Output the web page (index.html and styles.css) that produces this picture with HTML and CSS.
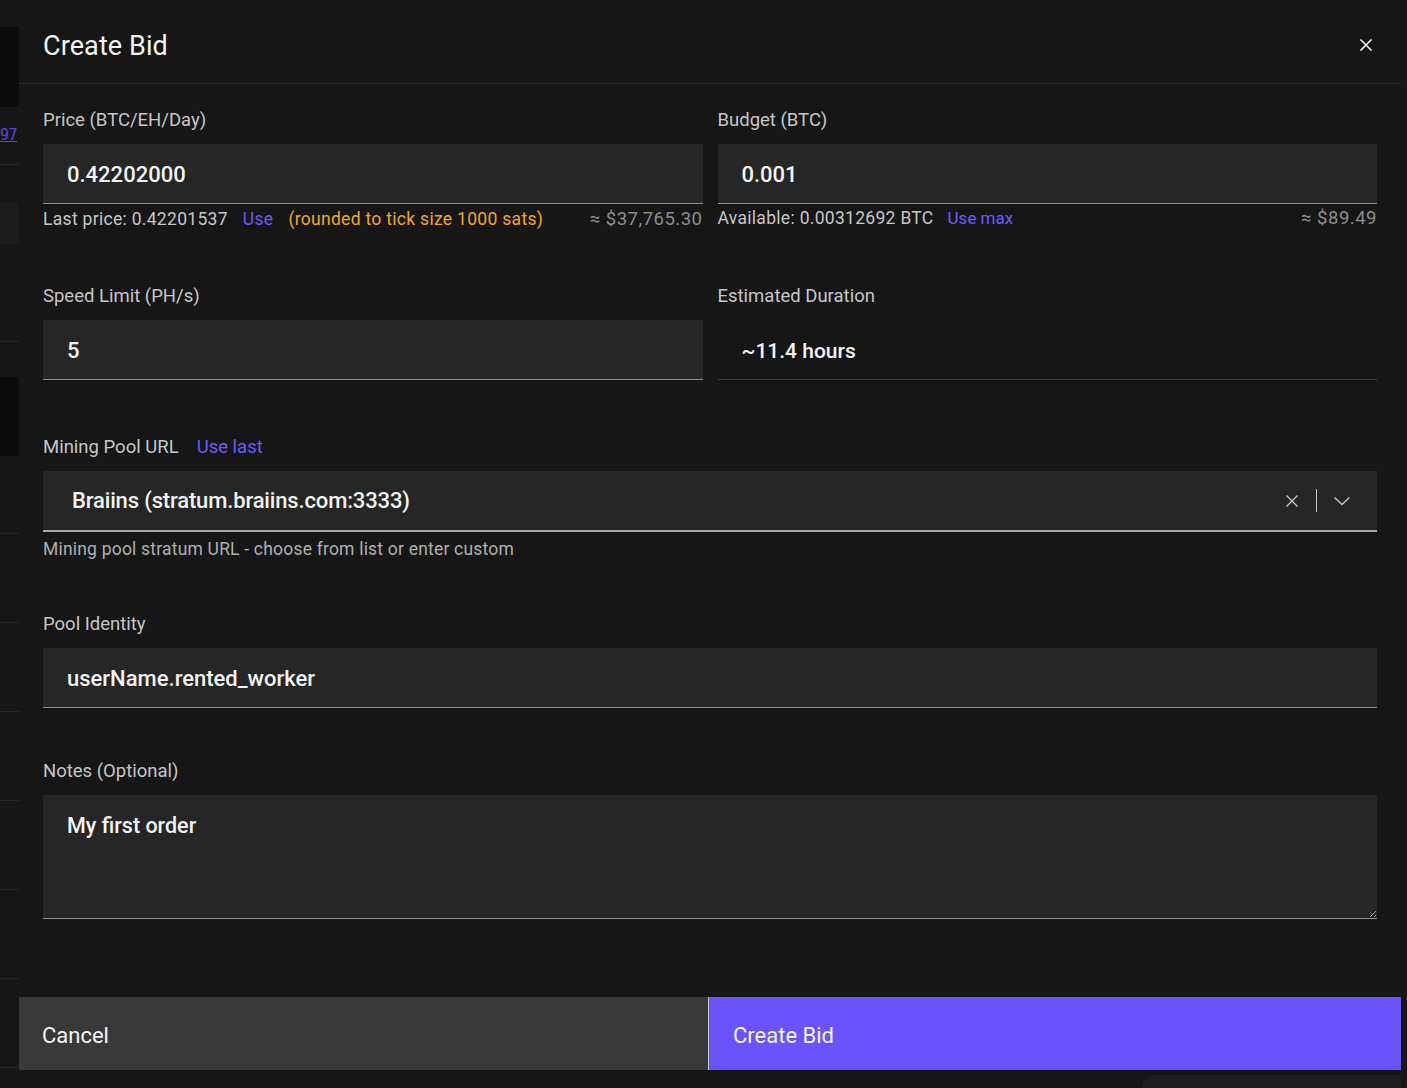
FILE: index.html
```html
<!DOCTYPE html>
<html lang="en">
<head>
<meta charset="utf-8">
<title>Create Bid</title>
<link rel="stylesheet" href="styles.css">
</head>
<body>
<div class="page">
  <div class="page-top">
    <div class="top-tab"></div>
  </div>
  <div class="page-strip">
    <div class="strip-dark s1"></div>
    <div class="strip-row s2"><span class="strip-link">97</span></div>
    <div class="strip-gap s3"></div>
    <div class="strip-gray s4"></div>
    <div class="strip-row s5"></div>
    <div class="strip-gap s6"></div>
    <div class="strip-dark s7"></div>
    <div class="strip-row s8"></div>
    <div class="strip-row s9"></div>
    <div class="strip-row s9"></div>
    <div class="strip-row s9"></div>
    <div class="strip-row s9"></div>
    <div class="strip-row s9"></div>
    <div class="strip-row s9"></div>
  </div>
  <div class="page-bottom">
    <div class="bottom-card"></div>
  </div>
</div>

<div class="overlay">
  <div class="modal" role="dialog" aria-labelledby="modal-title">
    <div class="modal-header">
      <h2 id="modal-title" class="modal-title">Create Bid</h2>
      <button class="close-btn" aria-label="Close">
        <svg width="14" height="14" viewBox="0 0 14 14"><path d="M1.5 1.5 L12.5 12.5 M12.5 1.5 L1.5 12.5" stroke="#f4f4f4" stroke-width="1.6" fill="none"/></svg>
      </button>
    </div>

    <div class="modal-body">
      <div class="grid-row row-first">
        <div class="field">
          <label class="label">Price (BTC/EH/Day)</label>
          <input class="text-input" type="text" value="0.42202000">
          <div class="helper">
            <span class="helper-text">Last price: 0.42201537</span>
            <span class="link gap-l">Use</span>
            <span class="warn gap-l">(rounded to tick size 1000 sats)</span>
            <span class="fiat">≈ $37,765.30</span>
          </div>
        </div>
        <div class="field">
          <label class="label">Budget (BTC)</label>
          <input class="text-input" type="text" value="0.001">
          <div class="helper helper-up">
            <span class="helper-text">Available: 0.00312692 BTC</span>
            <span class="link gap-m">Use max</span>
            <span class="fiat">≈ $89.49</span>
          </div>
        </div>
      </div>

      <div class="grid-row row-second">
        <div class="field">
          <label class="label">Speed Limit (PH/s)</label>
          <input class="text-input" type="text" value="5">
        </div>
        <div class="field">
          <label class="label">Estimated Duration</label>
          <div class="readonly">~11.4 hours</div>
        </div>
      </div>

      <div class="field row-pool">
        <div class="label-line">
          <label class="label">Mining Pool URL</label>
          <span class="link label-link">Use last</span>
        </div>
        <div class="combo">
          <span class="combo-value">Braiins (stratum.braiins.com:3333)</span>
          <span class="combo-actions">
            <svg class="combo-clear" width="14" height="14" viewBox="0 0 14 14"><path d="M1.5 1.5 L12.5 12.5 M12.5 1.5 L1.5 12.5" stroke="#c6c6c6" stroke-width="1.4" fill="none"/></svg>
            <span class="combo-divider"></span>
            <svg class="combo-chevron" width="18" height="10" viewBox="0 0 18 10"><path d="M1.5 1.5 L9 8.5 L16.5 1.5" stroke="#c6c6c6" stroke-width="1.4" fill="none"/></svg>
          </span>
        </div>
        <div class="helper-note">Mining pool stratum URL - choose from list or enter custom</div>
      </div>

      <div class="field row-identity">
        <label class="label">Pool Identity</label>
        <input class="text-input" type="text" value="userName.rented_worker">
      </div>

      <div class="field row-notes">
        <label class="label">Notes (Optional)</label>
        <textarea class="text-area">My first order</textarea>
      </div>
    </div>

    <div class="modal-footer">
      <button class="btn btn-secondary">Cancel</button>
      <button class="btn btn-primary">Create Bid</button>
    </div>
  </div>
</div>
</body>
</html>
```

FILE: styles.css
```css
* {
  box-sizing: border-box;
}

html, body {
  margin: 0;
  padding: 0;
  background: #161616;
  height: 100%;
  overflow: hidden;
}

body {
  font-family: Roboto, "Noto Sans", sans-serif;
  color: #f4f4f4;
}

/* ---------- background page (under overlay) ---------- */
.page {
  height: 1088px;
  display: flex;
  flex-direction: column;
}

.page-top {
  height: 0;
  position: relative;
}

.top-tab {
  position: absolute;
  left: 1056px;
  top: 0;
  width: 86px;
  height: 9px;
  background: #222222;
}

.page-strip {
  width: 20px;
  display: flex;
  flex-direction: column;
  flex: 1;
}

.strip-dark {
  background: #0b0b0b;
}

.strip-gray {
  background: #1c1c1c;
}

.strip-row {
  border-bottom: 1px solid #262626;
  display: flex;
  justify-content: flex-start;
  align-items: center;
  overflow: hidden;
}

.s1 { margin-top: 27px; height: 80px; }
.s2 { height: 58px; }
.s3 { height: 37px; }
.s4 { height: 42px; }
.s5 { height: 98px; }
.s6 { height: 35px; }
.s7 { height: 79px; }
.s8 { height: 78px; }
.s9 { height: 89px; flex: none; }

.strip-link {
  color: #5a46d6;
  text-decoration: underline;
  font-family: "DejaVu Sans Mono", monospace;
  font-size: 15px;
  letter-spacing: -0.5px;
  white-space: nowrap;
  padding-bottom: 2px;
}

.page-bottom {
  height: 0;
  position: relative;
}

.bottom-card {
  position: absolute;
  left: 1142px;
  bottom: 0;
  width: 259px;
  height: 13px;
  background: #1f1f1f;
  border-top-left-radius: 12px;
}

/* ---------- overlay & modal ---------- */
.overlay {
  position: fixed;
  inset: 0;
  display: flex;
  align-items: flex-start;
  padding-left: 19px;
}

.modal {
  width: 1382px;
  height: 1070px;
  background: #161616;
  display: flex;
  flex-direction: column;
}

.modal-header {
  height: 84px;
  border-bottom: 1px solid #2c2c2c;
  display: flex;
  align-items: center;
  justify-content: space-between;
  padding: 9px 28px 0 24px;
}

.modal-title {
  margin: 0;
  font-size: 27px;
  font-weight: 400;
  color: #f4f4f4;
  letter-spacing: 0.1px;
}

.close-btn {
  background: none;
  border: 0;
  padding: 0;
  width: 14px;
  height: 14px;
  margin-top: -2px;
  display: flex;
}

.modal-body {
  flex: 1;
  padding: 24px 24px 0;
  display: flex;
  flex-direction: column;
}

.grid-row {
  display: grid;
  grid-template-columns: 1fr 1fr;
  column-gap: 15px;
}

.row-second { margin-top: 55px; }
.row-pool { margin-top: 55px; }
.row-identity { margin-top: 53px; }
.row-notes { margin-top: 51px; }

.field {
  display: flex;
  flex-direction: column;
}

.label {
  font-size: 18.5px;
  line-height: 24px;
  color: #c6c6c6;
  margin-bottom: 12px;
}

.label-line {
  display: flex;
  align-items: baseline;
}

.label-link {
  margin-left: 18px;
  font-size: 18.5px;
  line-height: 24px;
}

.text-input {
  height: 60px;
  width: 100%;
  background: #262626;
  border: 0;
  border-bottom: 1px solid #8d8d8d;
  color: #f4f4f4;
  font-family: Roboto, "Noto Sans", sans-serif;
  font-size: 22px;
  font-weight: 500;
  padding: 2px 24px 0;
  outline: none;
}

.readonly {
  height: 60px;
  border-bottom: 1px solid #393939;
  display: flex;
  align-items: center;
  padding: 2px 0 0 24px;
  font-size: 21px;
  font-weight: 500;
  color: #f4f4f4;
}

.helper {
  margin-top: 5px;
  height: 20px;
  display: flex;
  align-items: center;
  font-size: 17.5px;
  letter-spacing: 0.3px;
  white-space: nowrap;
}

.helper-up {
  margin-top: 4px;
}

.helper-text {
  color: #c6c6c6;
}

.gap-l { margin-left: 15px; }
.gap-m { margin-left: 14px; }

.link {
  color: #6c5aff;
  cursor: pointer;
}

.gap-m.link {
  letter-spacing: 0;
  font-size: 17px;
}

.warn {
  color: #f5a623;
}

.fiat {
  margin-left: auto;
  color: #8d8d8d;
  font-size: 18.5px;
  letter-spacing: 0.5px;
}

.combo {
  height: 61px;
  background: #262626;
  border-bottom: 2px solid #a8a8a8;
  display: flex;
  align-items: center;
  padding: 0 26px 0 29px;
}

.combo-value {
  font-size: 22px;
  font-weight: 500;
  letter-spacing: -0.15px;
  color: #f4f4f4;
  flex: 1;
}

.combo-actions {
  display: flex;
  align-items: center;
}

.combo-clear {
  margin-right: 17px;
}

.combo-divider {
  width: 1px;
  height: 23px;
  background: #c6c6c6;
  margin-right: 16px;
}

.helper-note {
  margin-top: 7px;
  font-size: 17.5px;
  letter-spacing: 0.2px;
  line-height: 20px;
  color: #b0b0b0;
}

.text-area {
  height: 124px;
  width: 100%;
  background: #262626;
  border: 0;
  border-bottom: 1px solid #8d8d8d;
  color: #f4f4f4;
  font-family: Roboto, "Noto Sans", sans-serif;
  font-size: 21.5px;
  font-weight: 500;
  padding: 18px 24px;
  outline: none;
  resize: vertical;
}

/* ---------- footer ---------- */
.modal-footer {
  height: 73px;
  display: grid;
  grid-template-columns: 689px 1fr;
}

.btn {
  border: 0;
  margin: 0;
  font-family: Roboto, "Noto Sans", sans-serif;
  font-size: 22px;
  font-weight: 400;
  color: #f4f4f4;
  text-align: left;
  display: flex;
  align-items: center;
  padding: 3px 0 0 23px;
}

.btn-secondary {
  background: #393939;
}

.btn-primary {
  background: #6b52ff;
  border-left: 1px solid #c6c6c6;
  padding-left: 24px;
}
```
